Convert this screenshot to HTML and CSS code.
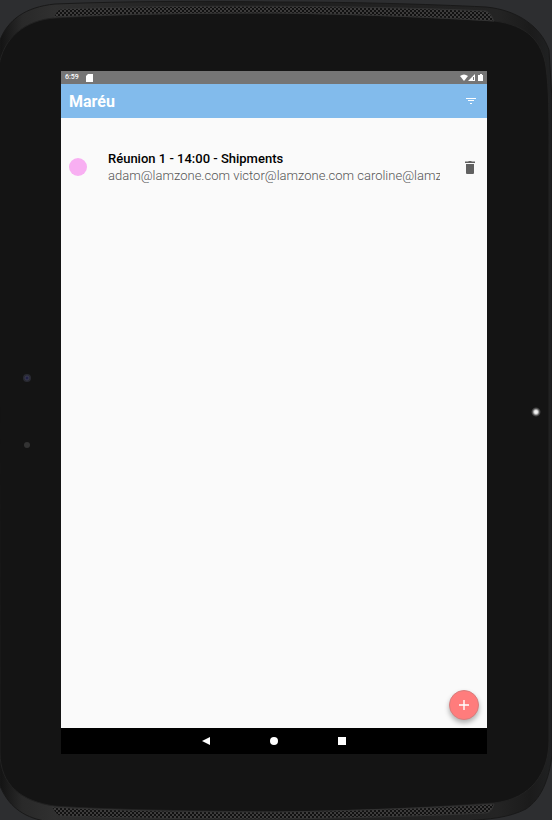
FILE: index.html
```html
<!DOCTYPE html>
<html lang="fr">
<head>
<meta charset="utf-8">
<meta name="viewport" content="width=device-width, initial-scale=1">
<title>Maréu</title>
<link rel="stylesheet" href="styles.css">
</head>
<body>
<div class="device">
  <svg class="shell" viewBox="0 0 552 820" preserveAspectRatio="none" aria-hidden="true">
    <defs>
      <linearGradient id="rim" x1="0" y1="0" x2="1" y2="0">
        <stop offset="0" stop-color="#131313"/>
        <stop offset=".04" stop-color="#292929"/>
        <stop offset=".1" stop-color="#303030"/>
        <stop offset=".4" stop-color="#1d1d1d"/>
        <stop offset=".9" stop-color="#242424"/>
        <stop offset=".96" stop-color="#1b1b1b"/>
        <stop offset="1" stop-color="#202122"/>
      </linearGradient>
      <pattern id="mesh" width="4" height="4" patternUnits="userSpaceOnUse">
        <rect width="4" height="4" fill="#3d3c3c"/>
        <rect width="2" height="2" fill="#111"/>
        <rect x="2" y="2" width="2" height="2" fill="#111"/>
      </pattern>
      <radialGradient id="glow">
        <stop offset="0" stop-color="#fff"/>
        <stop offset=".35" stop-color="#ddd"/>
        <stop offset=".7" stop-color="#555"/>
        <stop offset="1" stop-color="#141414"/>
      </radialGradient>
    </defs>
    <path fill="url(#rim)" stroke="#191919" d="M0 40C8 20 25 7 55 4C130 1 205 1 276 2C350 2 425 4 486 7C518 10 541 27 549 50L552 100V755C549 780 541 799 526 809C508 818 490 819 465 821H45C22 817 8 805 0 786Z"/>
    <path fill="#141414" stroke="#222" d="M-1 66C3 38 25 20 55 18C120 14 200 13 276 13C350 14 425 17 494 21C527 25 542 41 546 67C549 90 549 115 549 145V740C549 773 531 799 494 803C425 808 350 811 276 812C200 811 110 810 54 806C22 801 0 786 0 752Z"/>
    <path fill="url(#mesh)" stroke="#333" d="M54 17C56 12 58 9 62 9C160 5 360 5 486 11C490 12 492 17 494 21C430 17 350 14 276 13C200 13 120 14 54 17Z"/>
    <path fill="url(#mesh)" stroke="#333" d="M52 807C120 811 200 812 276 812C350 811 430 808 494 804C492 810 490 813 485 813C425 816 350 818 276 819C190 819 120 818 60 816C56 815 54 811 52 807Z"/>
    <circle cx="27" cy="378" r="4" fill="#292a32"/>
    <circle cx="27" cy="378" r="2" fill="#202044" stroke="#3a3a50"/>
    <circle cx="27" cy="445" r="3" fill="#333"/>
    <circle cx="536" cy="412" r="5" fill="url(#glow)"/>
  </svg>

  <div class="screen">
    <div class="status">
      <span class="clock">6:59</span>
      <svg class="sd" viewBox="0 0 7 8" aria-hidden="true"><path d="M2 0H7V8H0V2Z"/></svg>
      <svg class="signals" viewBox="0 0 24 8" aria-hidden="true">
        <path d="M0 2Q4-1 8 2L4 7Z"/>
        <path d="M8 7L15 0V7Z"/><path class="gap" d="M13 3H14V6H13Z"/>
        <path d="M18 1H20V0H22V1H23V7H18Z"/>
      </svg>
    </div>
    <header class="appbar">
      <h1>Maréu</h1>
      <button class="icon-button" type="button" aria-label="Filtrer">
        <svg class="filter" viewBox="0 0 10 6" aria-hidden="true"><path d="M0 0H10V1H0ZM2 2H8V3H2ZM4 5H6V6H4Z"/></svg>
      </button>
    </header>
    <main class="content">
      <ul class="meetings">
        <li class="meeting">
          <span class="dot"></span>
          <div class="details">
            <h2>Réunion 1 - 14:00 - Shipments</h2>
            <p>adam@lamzone.com victor@lamzone.com caroline@lamzone.com</p>
          </div>
          <button class="icon-button delete" type="button" aria-label="Supprimer">
            <svg class="trash" viewBox="0 0 10 13" aria-hidden="true"><path d="M0 0.5H3L4 0H6L7 0.5H10V2H0ZM1 3H9V12Q9 13 8 13H2Q1 13 1 12Z"/></svg>
          </button>
        </li>
      </ul>
      <button class="fab" type="button" aria-label="Ajouter">
        <svg viewBox="0 0 10 10" aria-hidden="true"><path d="M0 4.3H4.3V0H5.7V4.3H10V5.7H5.7V10H4.3V5.7H0Z"/></svg>
      </button>
    </main>
    <nav class="navbar">
      <button class="icon-button" type="button" aria-label="Retour"><svg viewBox="0 0 8 8" aria-hidden="true"><path d="M0 4L8 0V8Z"/></svg></button>
      <button class="icon-button" type="button" aria-label="Accueil"><svg viewBox="0 0 8 8" aria-hidden="true"><circle cx="4" cy="4" r="4"/></svg></button>
      <button class="icon-button" type="button" aria-label="Récents"><svg viewBox="0 0 8 8" aria-hidden="true"><path d="M0 0H8V8H0Z"/></svg></button>
    </nav>
  </div>
</div>
</body>
</html>
```
FILE: styles.css
```css
* {
  box-sizing: border-box;
}

body {
  margin: 0;
  background: #2d2e30;
  font-family: Roboto, "Liberation Sans", sans-serif;
}

h1, h2, p, ul {
  margin: 0;
  padding: 0;
}

svg {
  display: block;
  fill: currentColor;
}

.device {
  position: relative;
  display: flex;
  min-height: 100vh;
  padding: 71px 65px 66px 61px;
}

.shell {
  position: absolute;
  inset: 0;
  width: 100%;
  height: 100%;
}

.screen {
  position: relative;
  display: flex;
  flex: 1;
  flex-direction: column;
  min-width: 0;
  background: #fafafa;
}

.status {
  display: flex;
  align-items: center;
  height: 13px;
  padding: 0 3px 0 4px;
  background: #757575;
  color: #fff;
}

.clock {
  font-size: 7px;
  font-weight: 500;
  line-height: 13px;
}

.sd {
  width: 7px;
  height: 8px;
  margin-left: 7px;
}

.signals {
  width: 24px;
  height: 8px;
  margin-left: auto;
}

.gap {
  fill: #757575;
}

.appbar {
  display: flex;
  align-items: center;
  justify-content: space-between;
  height: 34px;
  padding: 0 8px;
  background: #82bbec;
  color: #fff;
}

.appbar h1 {
  font-size: 16px;
  font-weight: 700;
  line-height: 20px;
  padding-top: 2px;
}

.icon-button {
  display: grid;
  place-items: center;
  width: 16px;
  height: 20px;
  padding: 0;
  border: 0;
  background: none;
  color: inherit;
}

.filter {
  width: 10px;
  height: 6px;
}

.content {
  position: relative;
  flex: 1;
  padding-top: 32px;
}

.meetings {
  list-style: none;
}

.meeting {
  display: flex;
  align-items: center;
  padding: 0 9px 0 8px;
}

.dot {
  flex: none;
  width: 18px;
  height: 18px;
  margin-right: 21px;
  border-radius: 50%;
  background: #f8aff2;
}

.details {
  flex: 1;
  min-width: 0;
  margin-right: 22px;
}

.details h2 {
  color: #000;
  font-size: 13px;
  font-weight: 500;
  line-height: 17px;
}

.details p {
  overflow: hidden;
  color: #555;
  font-size: 13px;
  font-weight: 300;
  line-height: 17px;
  white-space: nowrap;
}

.delete {
  color: #616161;
}

.trash {
  width: 10px;
  height: 13px;
}

.fab {
  position: absolute;
  right: 8px;
  bottom: 8px;
  display: grid;
  place-items: center;
  width: 30px;
  height: 30px;
  padding: 0;
  border: 1px solid #d97c7c;
  border-radius: 50%;
  background: #ff7c7c;
  box-shadow: 0 3px 5px rgba(0, 0, 0, 0.3);
  color: #fff;
}

.fab svg {
  width: 10px;
  height: 10px;
}

.navbar {
  display: flex;
  align-items: center;
  justify-content: center;
  gap: 52px;
  height: 26px;
  background: #000;
  color: #fff;
}

.navbar svg {
  width: 8px;
  height: 8px;
}
```
